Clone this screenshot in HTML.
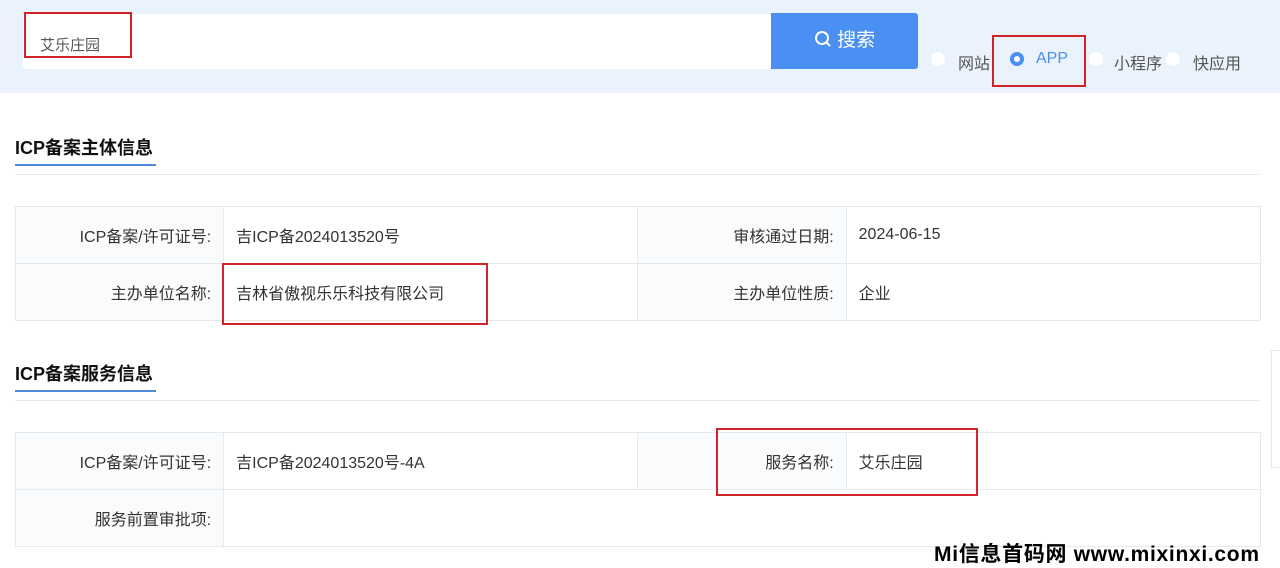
<!DOCTYPE html>
<html><head><meta charset="utf-8"><style>
*{margin:0;padding:0;box-sizing:border-box}
body{width:1280px;height:563px;overflow:hidden;background:#fff;font-family:"Liberation Sans","Noto Sans CJK SC",sans-serif;color:#333;position:relative}
.a{position:absolute}
.top{left:0;top:0;width:1280px;height:93px;background:#eaf3fc}
.red{border:2px solid #d0242b}
.title{font-size:18px;font-weight:bold;color:#111}
.line{height:1px;background:#e4e7ec}
.ul{height:2px;background:#4a8ad8}
table{position:absolute;border-collapse:collapse;font-size:16px;width:1246px}
td{border:1px solid #e6e9ee;height:57px;padding:0 12px;vertical-align:middle}
td.l{text-align:right;width:208px;background:#fafbfc}
td.v{width:414px;padding-left:12px}
.radio{width:14px;height:14px;border-radius:50%;background:#fff}
</style></head><body>
<div class="a top"></div>
<div class="a" style="left:23px;top:14px;width:750px;height:55px;background:#fff;border-radius:3px"></div>
<div class="a" style="left:40px;top:34px;font-size:15px;color:#555">艾乐庄园</div>
<div class="a red" style="left:24px;top:12px;width:108px;height:46px"></div>
<div class="a" style="left:771px;top:13px;width:147px;height:56px;background:#4990f2;border-radius:0 3px 3px 0;color:#fff;font-size:19px;line-height:56px;text-align:center">
<svg width="18" height="18" viewBox="0 0 18 18" style="vertical-align:-2px"><circle cx="8" cy="8" r="6" fill="none" stroke="#fff" stroke-width="2"/><path d="M12 12l4 4" stroke="#fff" stroke-width="2"/></svg> 搜索</div>
<div class="a radio" style="left:931px;top:52px"></div>
<div class="a" style="left:958px;top:50px;font-size:16px;color:#555">网站</div>
<div class="a radio" style="left:1010px;top:52px;background:#4990f2"></div>
<div class="a" style="left:1014px;top:56px;width:6px;height:6px;border-radius:50%;background:#fff"></div>
<div class="a" style="left:1036px;top:50px;font-size:16px;color:#4990f2">APP</div>
<div class="a red" style="left:992px;top:35px;width:94px;height:52px"></div>
<div class="a radio" style="left:1089px;top:52px"></div>
<div class="a" style="left:1114px;top:50px;font-size:16px;color:#555">小程序</div>
<div class="a radio" style="left:1166px;top:52px"></div>
<div class="a" style="left:1193px;top:50px;font-size:16px;color:#555">快应用</div>

<div class="a title" style="left:15px;top:134px">ICP备案主体信息</div>
<div class="a ul" style="left:15px;top:164px;width:141px"></div>
<div class="a line" style="left:15px;top:174px;width:1245px"></div>
<table style="left:15px;top:206px"><tr><td class="l">ICP备案/许可证号:</td><td class="v">吉ICP备2024013520号</td><td class="l">审核通过日期:</td><td class="v">2024-06-15</td></tr>
<tr><td class="l">主办单位名称:</td><td class="v">吉林省傲视乐乐科技有限公司</td><td class="l">主办单位性质:</td><td class="v">企业</td></tr></table>
<div class="a red" style="left:222px;top:263px;width:266px;height:62px"></div>

<div class="a title" style="left:15px;top:360px">ICP备案服务信息</div>
<div class="a ul" style="left:15px;top:390px;width:141px"></div>
<div class="a line" style="left:15px;top:400px;width:1245px"></div>
<table style="left:15px;top:432px"><tr><td class="l">ICP备案/许可证号:</td><td class="v">吉ICP备2024013520号-4A</td><td class="l">服务名称:</td><td class="v">艾乐庄园</td></tr>
<tr><td class="l">服务前置审批项:</td><td class="v" colspan="3"></td></tr></table>
<div class="a red" style="left:716px;top:428px;width:262px;height:68px"></div>
<div class="a" style="left:1271px;top:350px;width:12px;height:118px;border:1px solid #e4e7ec;background:#fff"></div>
<div class="a" style="left:934px;top:538px;font-size:21px;font-weight:bold;color:#000;letter-spacing:0.7px;white-space:nowrap">Mi信息首码网 www.mixinxi.com</div>
</body></html>
